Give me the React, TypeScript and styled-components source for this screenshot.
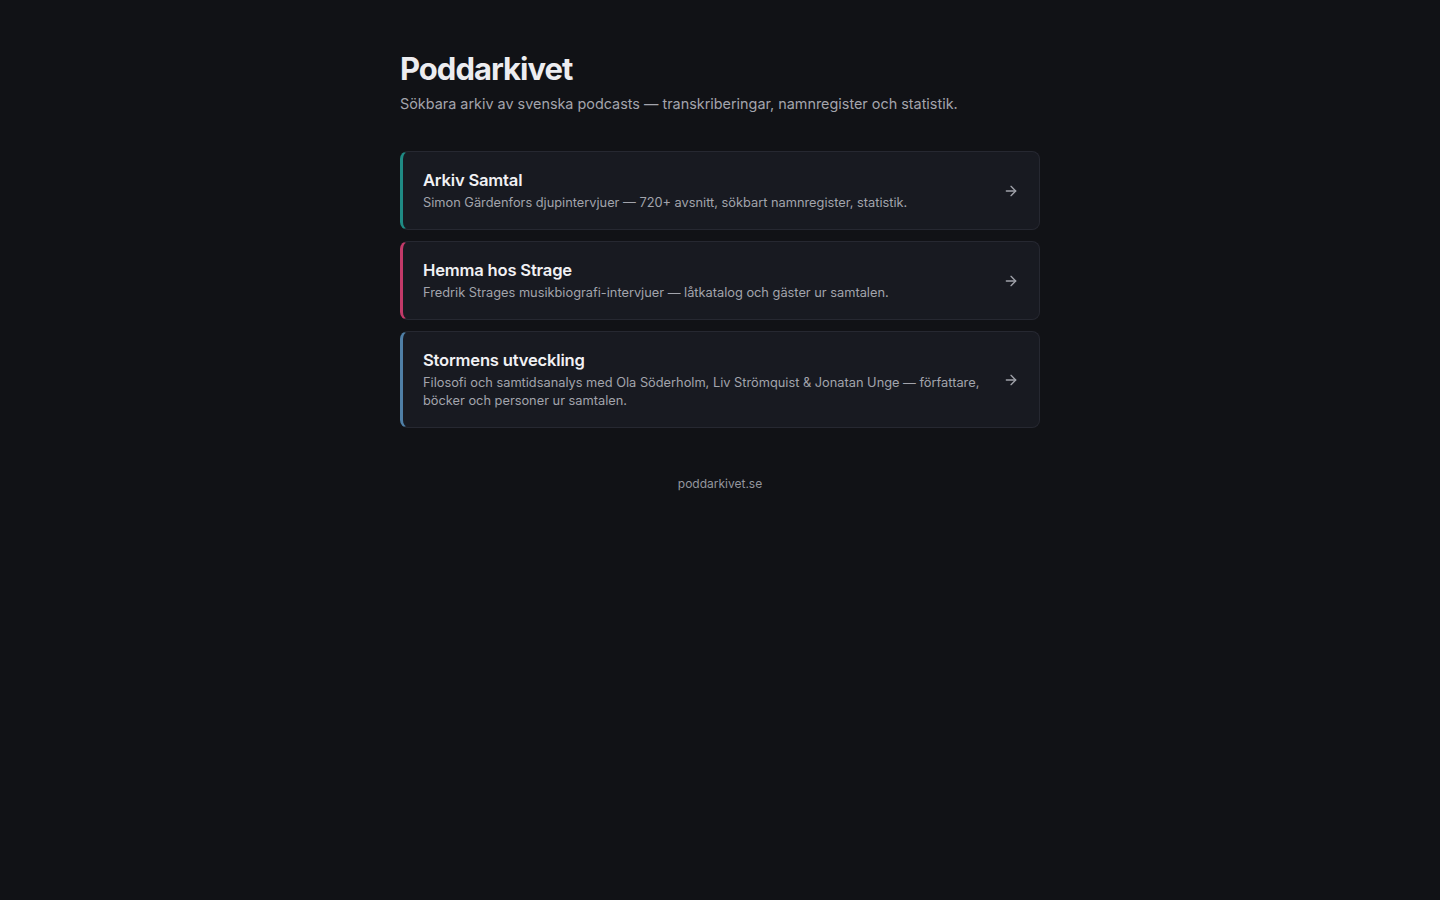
import styled, { createGlobalStyle } from "styled-components"

const GlobalStyle = createGlobalStyle`
  html, body {
    margin: 0;
    padding: 0;
    background: #111216;
  }
  body {
    font-family: Inter, "Noto Sans", "Liberation Sans", sans-serif;
    color: #e8e8ec;
    -webkit-font-smoothing: antialiased;
  }
`

const Page = styled.div`
  min-height: 100vh;
  display: flex;
  justify-content: center;
`

const Main = styled.main`
  width: 640px;
  padding-top: 50px;
  display: flex;
  flex-direction: column;
`

const Title = styled.h1`
  margin: 0;
  font-size: 31px;
  line-height: 38px;
  font-weight: 700;
  letter-spacing: -1px;
  color: #ececf0;
`

const Lead = styled.p`
  margin: 5px 0 0;
  font-size: 14.4px;
  line-height: 22px;
  color: #a3a4ac;
`

const List = styled.div`
  margin-top: 36px;
  display: flex;
  flex-direction: column;
  gap: 11px;
`

const Card = styled.a<{ $accent: string }>`
  display: flex;
  align-items: center;
  gap: 20px;
  padding: 17px 20px;
  background: #181a21;
  border: 1px solid #262831;
  border-left: 3px solid ${(p) => p.$accent};
  border-radius: 8px;
  text-decoration: none;
  color: inherit;
  cursor: pointer;
`

const Body = styled.div`
  flex: 1;
  display: flex;
  flex-direction: column;
  gap: 3px;
`

const CardTitle = styled.h2`
  margin: 0;
  font-size: 16.6px;
  line-height: 22px;
  font-weight: 600;
  letter-spacing: -0.2px;
  color: #f1f1f4;
`

const CardText = styled.p`
  margin: 0;
  font-size: 12.8px;
  line-height: 18px;
  color: #a2a4ac;
`

const Arrow = styled.span`
  display: flex;
  color: #a0a2aa;
`

const Footer = styled.footer`
  margin-top: 47px;
  text-align: center;
  font-size: 12px;
  line-height: 18px;
  color: #94969e;
`

const podcasts = [
  {
    title: "Arkiv Samtal",
    text: "Simon Gärdenfors djupintervjuer — 720+ avsnitt, sökbart namnregister, statistik.",
    accent: "#1f8a84",
  },
  {
    title: "Hemma hos Strage",
    text: "Fredrik Strages musikbiografi-intervjuer — låtkatalog och gäster ur samtalen.",
    accent: "#c23a69",
  },
  {
    title: "Stormens utveckling",
    text: "Filosofi och samtidsanalys med Ola Söderholm, Liv Strömquist & Jonatan Unge — författare, böcker och personer ur samtalen.",
    accent: "#4f7fa6",
  },
]

const ArrowIcon = () => (
  <svg width="16" height="16" viewBox="0 0 24 24" fill="none" stroke="currentColor" strokeWidth="2" strokeLinecap="round" strokeLinejoin="round">
    <path d="M5 12h14" />
    <path d="m12 5 7 7-7 7" />
  </svg>
)

const App = () => {
  return (
    <Page>
      <GlobalStyle />
      <Main>
        <Title>Poddarkivet</Title>
        <Lead>Sökbara arkiv av svenska podcasts — transkriberingar, namnregister och statistik.</Lead>
        <List>
          {podcasts.map((p) => (
            <Card key={p.title} $accent={p.accent}>
              <Body>
                <CardTitle>{p.title}</CardTitle>
                <CardText>{p.text}</CardText>
              </Body>
              <Arrow>
                <ArrowIcon />
              </Arrow>
            </Card>
          ))}
        </List>
        <Footer>poddarkivet.se</Footer>
      </Main>
    </Page>
  )
}

export default App
